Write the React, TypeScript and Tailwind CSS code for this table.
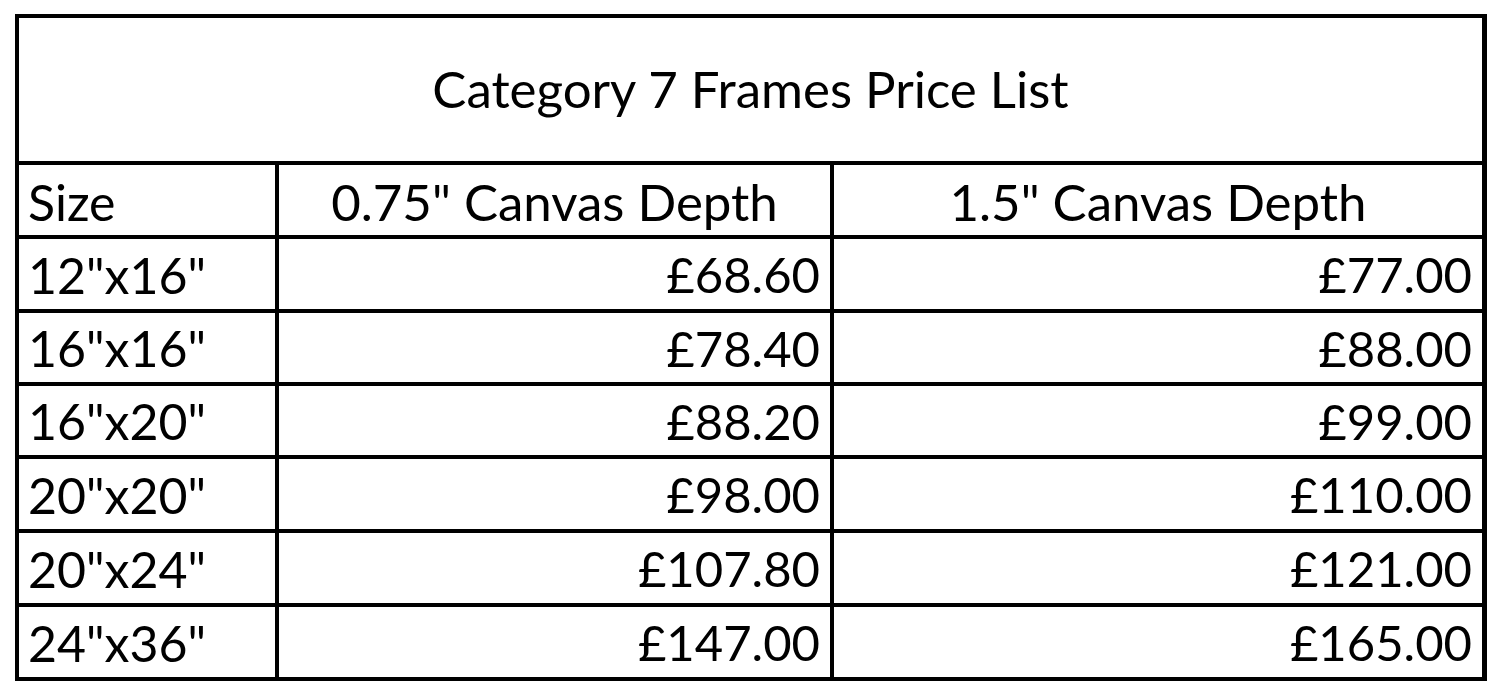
const ROWS: [string, string, string][] = [
  ['12"x16"', '£68.60', '£77.00'],
  ['16"x16"', '£78.40', '£88.00'],
  ['16"x20"', '£88.20', '£99.00'],
  ['20"x20"', '£98.00', '£110.00'],
  ['20"x24"', '£107.80', '£121.00'],
  ['24"x36"', '£147.00', '£165.00'],
]

export default function App() {
  return (
    <div className="h-[696px] w-[1500px] bg-white pl-[15px] pt-[14px] font-['Lato','Liberation_Sans',sans-serif] text-black">
      <div className="grid w-[1472px] grid-cols-[256px_551px_648px] grid-rows-[143px_70px_70px_69px_69px_70px_70px_70px] gap-[4px] bg-black p-[4px]">
        {/* Title */}
        <div className="col-span-3 flex items-center justify-center bg-white text-[51px]">
          Category 7 Frames Price List
        </div>

        {/* Header row */}
        <div className="flex items-center bg-white pl-[9px] pt-[4px] text-[50px]">Size</div>
        <div className="flex items-center justify-center bg-white pt-[4px] text-[51px]">0.75" Canvas Depth</div>
        <div className="flex items-center justify-center bg-white pt-[4px] text-[51px]">1.5" Canvas Depth</div>

        {ROWS.map(([size, a, b]) => (
          <div key={size} className="contents">
            <div className="flex items-center bg-white pl-[9px] pt-[2px] text-[50px]">{size}</div>
            <div className="flex items-center justify-end bg-white pr-[10px] pt-[2px] text-[49px]">{a}</div>
            <div className="flex items-center justify-end bg-white pr-[10px] pt-[2px] text-[49px]">{b}</div>
          </div>
        ))}
      </div>
    </div>
  )
}
